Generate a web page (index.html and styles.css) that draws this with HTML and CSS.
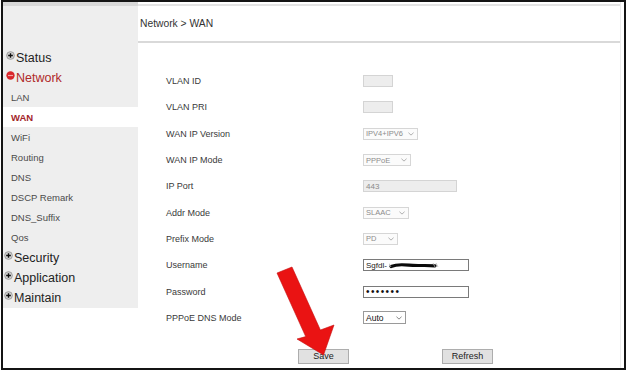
FILE: index.html
```html
<!DOCTYPE html>
<html>
<head>
<meta charset="utf-8">
<link rel="stylesheet" href="styles.css">
</head>
<body>
<div class="frame">
  <nav class="sidebar">
    <div class="top top-shift"><svg class="ico" viewBox="0 0 10 10"><circle cx="5" cy="5" r="4.3" class="ico-plus-bg"/><path d="M5 2.4V7.6M2.4 5H7.6" class="ico-plus"/></svg><span>Status</span></div>
    <div class="top top-shift top-open"><svg class="ico" viewBox="0 0 10 10"><circle cx="5" cy="5" r="4.6" class="ico-minus-bg"/><path d="M2.2 5H7.8" class="ico-minus"/></svg><span>Network</span></div>
    <div class="sub">LAN</div>
    <div class="sub sub-active">WAN</div>
    <div class="sub">WiFi</div>
    <div class="sub">Routing</div>
    <div class="sub">DNS</div>
    <div class="sub">DSCP Remark</div>
    <div class="sub">DNS_Suffix</div>
    <div class="sub">Qos</div>
    <div class="top"><svg class="ico" viewBox="0 0 10 10"><circle cx="5" cy="5" r="4.3" class="ico-plus-bg"/><path d="M5 2.4V7.6M2.4 5H7.6" class="ico-plus"/></svg><span>Security</span></div>
    <div class="top"><svg class="ico" viewBox="0 0 10 10"><circle cx="5" cy="5" r="4.3" class="ico-plus-bg"/><path d="M5 2.4V7.6M2.4 5H7.6" class="ico-plus"/></svg><span>Application</span></div>
    <div class="top"><svg class="ico" viewBox="0 0 10 10"><circle cx="5" cy="5" r="4.3" class="ico-plus-bg"/><path d="M5 2.4V7.6M2.4 5H7.6" class="ico-plus"/></svg><span>Maintain</span></div>
  </nav>
  <main class="main">
    <div class="header">Network &gt; WAN</div>
    <div class="form">
      <div class="label">VLAN ID</div>
      <div class="cell"><div class="ctl ctl-dis w-vlan"></div></div>
      <div class="label">VLAN PRI</div>
      <div class="cell"><div class="ctl ctl-dis w-vlan"></div></div>
      <div class="label">WAN IP Version</div>
      <div class="cell"><div class="ctl sel sel-dis w-ipver"><span>IPV4+IPV6</span><svg class="chev" viewBox="0 0 7 4"><path d="M0.5 0.5L3.5 3.3L6.5 0.5"/></svg></div></div>
      <div class="label">WAN IP Mode</div>
      <div class="cell"><div class="ctl sel sel-dis w-pppoe"><span>PPPoE</span><svg class="chev" viewBox="0 0 7 4"><path d="M0.5 0.5L3.5 3.3L6.5 0.5"/></svg></div></div>
      <div class="label">IP Port</div>
      <div class="cell"><div class="ctl ctl-dis w-port"><span class="dim">443</span></div></div>
      <div class="label">Addr Mode</div>
      <div class="cell"><div class="ctl sel sel-dis w-slaac"><span>SLAAC</span><svg class="chev" viewBox="0 0 7 4"><path d="M0.5 0.5L3.5 3.3L6.5 0.5"/></svg></div></div>
      <div class="label">Prefix Mode</div>
      <div class="cell"><div class="ctl sel sel-dis w-pd"><span>PD</span><svg class="chev" viewBox="0 0 7 4"><path d="M0.5 0.5L3.5 3.3L6.5 0.5"/></svg></div></div>
      <div class="label">Username</div>
      <div class="cell"><div class="ctl ctl-on w-user"><span>Sgfdl-</span><svg class="scribble" viewBox="0 0 50 8"><path d="M2 5.5C8 3 14 3.5 20 4.2C28 5 36 4 46 4.8" class="scr-main"/><path d="M0 2.5L2 6" class="scr-faint"/><path d="M44 2L46 6M47 2L49 6" class="scr-faint"/></svg></div></div>
      <div class="label">Password</div>
      <div class="cell"><div class="ctl ctl-on w-user"><span class="dots">&bull;&bull;&bull;&bull;&bull;&bull;&bull;</span></div></div>
      <div class="label">PPPoE DNS Mode</div>
      <div class="cell"><div class="ctl sel sel-on w-auto"><span>Auto</span><svg class="chev" viewBox="0 0 7 4"><path d="M0.5 0.5L3.5 3.3L6.5 0.5"/></svg></div></div>
    </div>
    <div class="buttons">
      <button class="btn">Save</button>
      <button class="btn">Refresh</button>
    </div>
  </main>
</div>
<svg class="arrow" viewBox="0 0 628 373" width="628" height="373">
  <polygon points="277,273 292,267 320.4,330 334,325 323.5,355 297,339 305.7,336.6" class="arrow-shape"/>
</svg>
</body>
</html>
```
FILE: styles.css
```css
html, body {
  margin: 0;
  padding: 0;
  background: #ffffff;
  font-family: "Liberation Sans", Arial, sans-serif;
}
body {
  position: relative;
  width: 628px;
  height: 373px;
  overflow: hidden;
}
.frame {
  margin: 0 0 0 1px;
  width: 621px;
  height: 366px;
  border: 2px solid #141414;
  display: flex;
  align-items: flex-start;
}
.sidebar {
  width: 135px;
  flex: none;
  background: #eeeeee;
  border-top: 4px solid #d8d8d8;
  padding: 41px 0 1px 0;
}
.top {
  height: 20px;
  display: flex;
  align-items: center;
  font-size: 12.5px;
  color: #222;
  padding-left: 1px;
}
.top span {
  position: relative;
  top: 1px;
}
.top-shift {
  padding-left: 3px;
}
.top-open {
  color: #b02a2a;
}
.ico {
  width: 9px;
  height: 9px;
  margin-right: 1px;
  flex: none;
  position: relative;
  top: -2px;
}
.ico-plus-bg {
  fill: #d2d2d2;
  stroke: #8a8a8a;
  stroke-width: 0.8;
}
.ico-plus {
  stroke: #111;
  stroke-width: 1.5;
  fill: none;
}
.ico-minus-bg {
  fill: #d9262b;
}
.ico-minus {
  stroke: #f2a5a5;
  stroke-width: 1.3;
  fill: none;
}
.sub {
  height: 20px;
  display: flex;
  align-items: center;
  padding-left: 8px;
  font-size: 9.5px;
  color: #4a4a4a;
}
.sub-active {
  background: #ffffff;
  color: #a3262a;
  font-weight: bold;
}
.main {
  flex: 1;
  align-self: stretch;
  border-right: 1px solid #ececec;
  margin-right: 3px;
}
.header {
  margin-top: 2px;
  height: 35px;
  border-top: 2px solid #e4e4e4;
  border-bottom: 2px solid #d9d9d9;
  display: flex;
  align-items: center;
  padding-left: 2px;
  font-size: 10.3px;
  color: #333;
}
.form {
  margin-top: 25px;
  padding-left: 28px;
  display: grid;
  grid-template-columns: 197px auto;
  grid-auto-rows: 26.3px;
  align-items: center;
}
.label {
  font-size: 9px;
  color: #3a3a3a;
}
.cell {
  display: flex;
  align-items: center;
}
.ctl {
  box-sizing: border-box;
  height: 12px;
  display: flex;
  align-items: center;
  padding-left: 2px;
  font-size: 8px;
  font-family: "Liberation Sans", Arial, sans-serif;
  position: relative;
}
.ctl-dis {
  background: #ededed;
  border: 1px solid #d4d4d4;
}
.dim {
  color: #8a8a8a;
}
.sel {
  justify-content: space-between;
  padding-right: 3px;
}
.sel-dis {
  background: #fbfbfb;
  border: 1px solid #d6d6d6;
  color: #8c8c8c;
  font-size: 7.5px;
}
.sel-on {
  background: #ffffff;
  border: 1px solid #9a9a9a;
  color: #111;
  height: 13px;
  font-size: 8.5px;
}
.ctl-on {
  background: #ffffff;
  border: 1px solid #7a7a7a;
  color: #222;
}
.chev {
  width: 6px;
  height: 4px;
}
.chev path {
  fill: none;
  stroke: #9a9a9a;
  stroke-width: 0.9;
}
.sel-on .chev path {
  stroke: #666;
}
.scribble {
  width: 50px;
  height: 8px;
  margin-left: 2px;
}
.scr-main {
  fill: none;
  stroke: #0a0a0a;
  stroke-width: 3.2;
  stroke-linecap: round;
}
.scr-faint {
  fill: none;
  stroke: #b5b5b5;
  stroke-width: 0.8;
}
.dots {
  font-size: 10px;
  letter-spacing: 1.4px;
  color: #111;
  line-height: 10px;
}
.w-vlan { width: 30px; }
.w-ipver { width: 55px; }
.w-pppoe { width: 48px; }
.w-port { width: 94px; }
.w-slaac { width: 46px; }
.w-pd { width: 35px; }
.w-user { width: 106px; }
.w-auto { width: 43px; }
.buttons {
  margin-top: 18px;
  padding-left: 160px;
  display: flex;
  gap: 93px;
}
.btn {
  box-sizing: border-box;
  width: 51px;
  height: 15px;
  padding: 0;
  background: #e1e1e1;
  border: 1px solid #adadad;
  border-radius: 0;
  font-family: "Liberation Sans", Arial, sans-serif;
  font-size: 9px;
  color: #222;
  line-height: 13px;
}
.arrow {
  position: absolute;
  left: 0;
  top: 0;
  pointer-events: none;
}
.arrow-shape {
  fill: #ea1313;
  stroke: #c40c0c;
  stroke-width: 0.6;
}
```
